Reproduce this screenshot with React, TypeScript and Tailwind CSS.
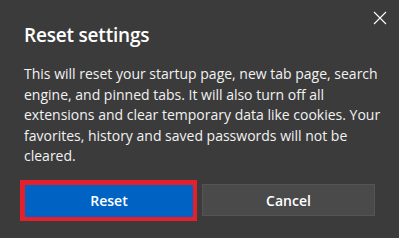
const lines = [
  "This will reset your startup page, new tab page, search",
  "engine, and pinned tabs. It will also turn off all",
  "extensions and clear temporary data like cookies. Your",
  "favorites, history and saved passwords will not be",
  "cleared.",
];

export default function App() {
  return (
    <div className="relative h-[238px] w-[399px] overflow-hidden bg-[#3b3b3b] text-white [font-family:'Open_Sans','Noto_Sans',sans-serif]">
      {/* Close button */}
      <button
        type="button"
        aria-label="Close"
        className="absolute right-[12px] top-[11px] flex h-[14px] w-[14px] items-center justify-center text-white"
      >
        <svg width={14} height={14} viewBox="0 0 14 14" fill="none" stroke="currentColor" strokeWidth={1.1}>
          <path d="M1 1l12 12M13 1L1 13" />
        </svg>
      </button>

      <div className="px-6 pt-[21px]">
        <h1 className="text-[19px] font-semibold leading-[28px] tracking-[-0.2px]">Reset settings</h1>

        <p className="mt-[15px] whitespace-nowrap text-[14px] leading-[20.5px] text-[#f2f2f2]">
          {lines.map((l) => (
            <span key={l} className="block">
              {l}
            </span>
          ))}
        </p>

        <div className="ml-[-4px] mt-[13px] flex items-center gap-[5px]">
          {/* Red highlight around the primary button */}
          <div className="w-[177px] border-b-4 border-l-[5px] border-r-4 border-t-[5px] border-[#e3202b]">
            <button
              type="button"
              className="flex h-[32px] w-full items-center justify-center bg-[#0063c4] text-[14px] font-semibold text-white"
            >
              Reset
            </button>
          </div>
          <button
            type="button"
            className="flex h-[32px] w-[173px] items-center justify-center border border-[#545454] bg-[#4a4a4a] text-[14px] font-semibold text-white"
          >
            Cancel
          </button>
        </div>
      </div>
    </div>
  );
}
